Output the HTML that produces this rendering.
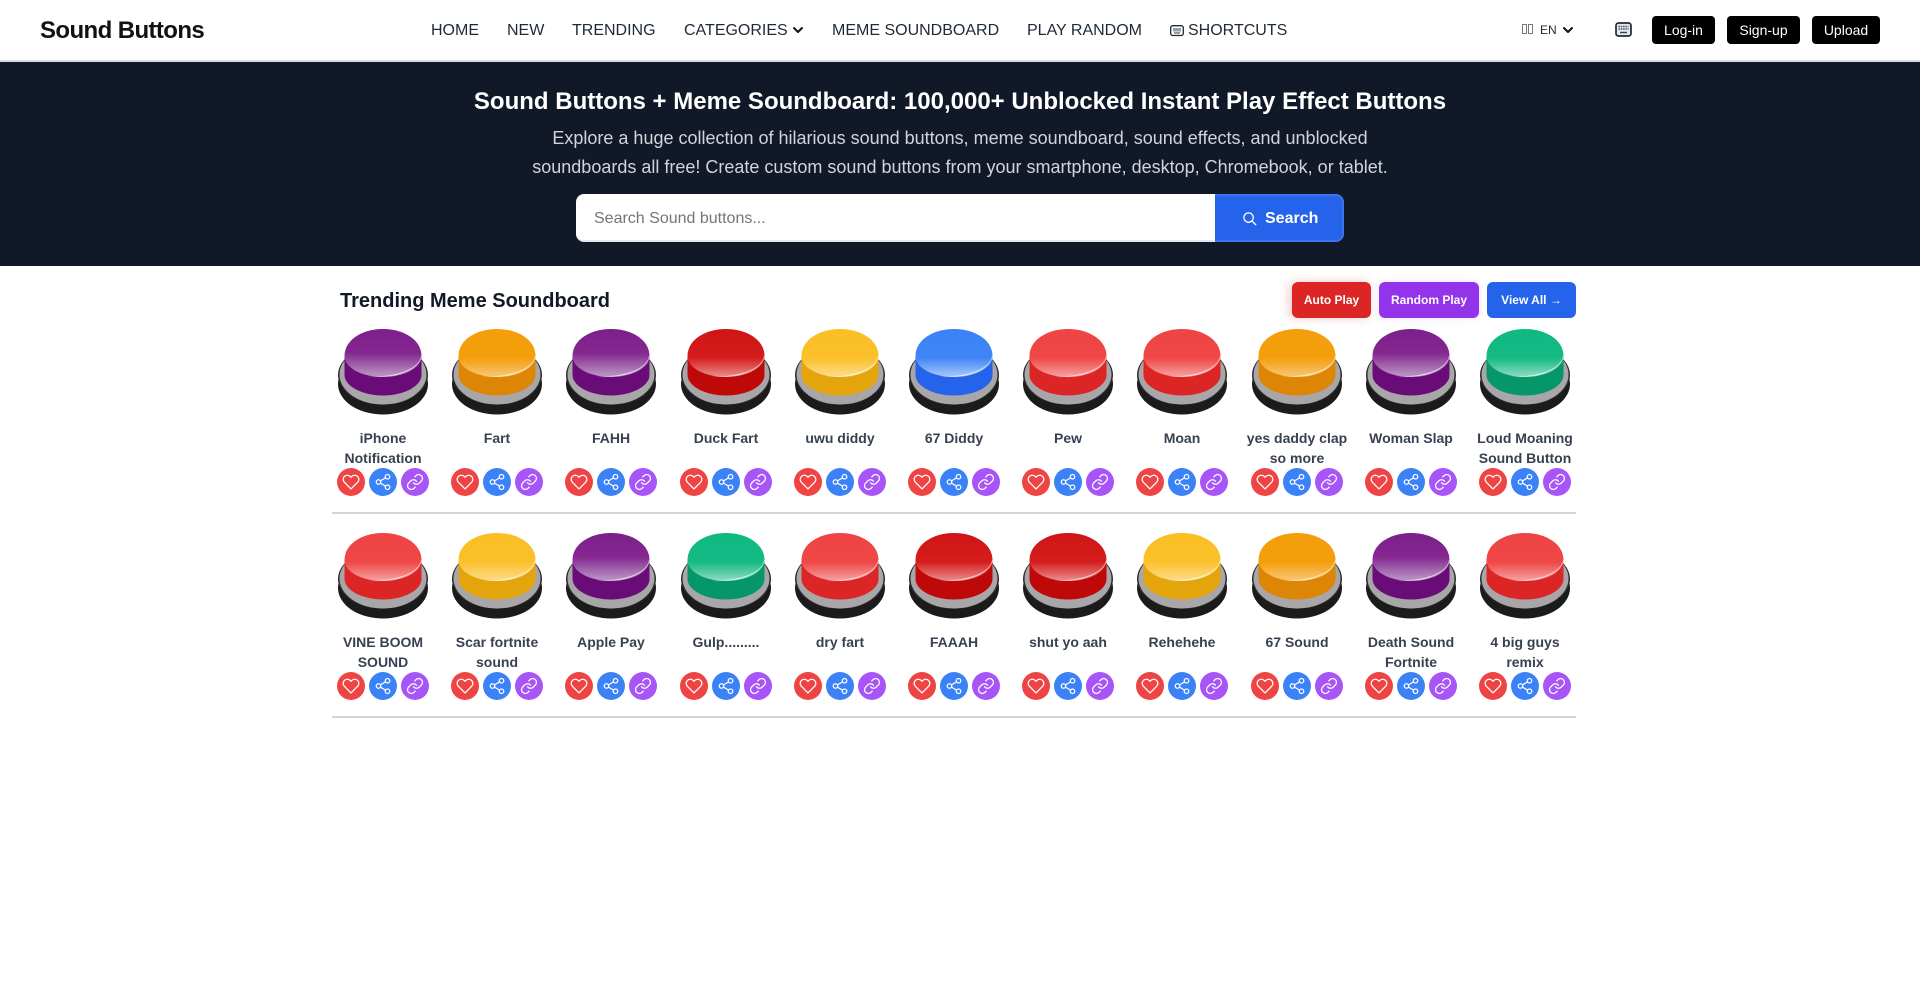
<!DOCTYPE html>
<html lang="en"><head><meta charset="utf-8"><title>Sound Buttons</title>
<style>
*{box-sizing:border-box;margin:0;padding:0}
html,body{width:1920px;height:993px;overflow:hidden;background:#fff;font-family:"Liberation Sans",sans-serif;color:#111827}
.a{position:absolute;white-space:nowrap}
#hd{position:absolute;left:0;top:0;width:1920px;height:62px;background:#fff;border-bottom:2px solid #d8dbe0}
.logo{left:40px;top:17px;font-size:24px;font-weight:700;line-height:28px;letter-spacing:-.6px;color:#111}
.nav{top:19px;font-size:16px;line-height:24px;color:#1f2937}
.btn{top:16px;height:28px;background:#000;color:#fff;font-size:14px;line-height:28px;text-align:center;border-radius:4px}
#hero{position:absolute;left:0;top:62px;width:1920px;height:204px;background:#111827}
.c{left:0;width:1920px;text-align:center}
h1{font-size:24px;line-height:32px;font-weight:700;color:#fff}
.p{font-size:18px;line-height:29px;color:#d1d5db}
.inp{left:576px;top:194px;width:640px;height:48px;background:#fff;border-radius:8px 0 0 8px;border-bottom:2px solid #e5e7eb;font-size:16px;line-height:49px;padding-left:18px;color:#757575;overflow:hidden}
.sb{left:1215px;top:194px;width:129px;height:48px;background:#2563eb;border:2px solid #3b74ee;border-left:0;border-radius:0 8px 8px 0;color:#fff;font-weight:700;font-size:16px;line-height:44px}
h2{font-size:20px;line-height:28px;font-weight:700;color:#111827}
.tb{top:282px;height:36px;border-radius:6px;color:#fff;font-size:12px;font-weight:700;line-height:36px;text-align:center}
.card{position:absolute;width:114px;height:184px}
.card>svg.b{position:absolute;left:12px;top:0;width:90px;height:86px}
.card .n{position:absolute;left:0;top:99px;width:114px;text-align:center;font-size:14px;font-weight:700;line-height:20px;color:#374151;white-space:nowrap}
.ic{position:absolute;top:139px;width:28px;height:28px;border-radius:50%}
.ic svg{position:absolute;left:5px;top:5px;width:18px;height:18px;fill:none;stroke:#fff;stroke-width:1.700;stroke-linecap:round;stroke-linejoin:round}
.h{left:11px;background:#ef4444}.s{left:43px;background:#3b82f6}.l{left:75px;background:#a855f7}
.dv{position:absolute;left:332px;width:1244px;height:2px;background:#d1d5db}
.tf{position:absolute;top:24px;width:5px;height:10px;border:1px solid #777}
</style></head><body>
<svg width="0" height="0" style="position:absolute"><defs>
<g id="base"><ellipse cx="45" cy="55" rx="45" ry="30.500" fill="#1b1b1b"/><ellipse cx="45" cy="46" rx="45" ry="30" fill="#2b2b2b"/><ellipse cx="45" cy="45.500" rx="43.500" ry="30" fill="#a8a6a8"/></g>
<path id="top" d="M6.500 27C6.500 11 24 0 45 0S83.500 11 83.500 27C83.500 39 66 48 45 48S6.500 39 6.500 27Z"/>
<path id="sd" d="M6.500 27V46C6.500 57 24 66.500 45 66.500S83.500 57 83.500 46V27Z"/>
<linearGradient id="hl" gradientUnits="userSpaceOnUse" x1="30" y1="0" x2="84" y2="0"><stop offset="0" stop-color="#fff" stop-opacity="0"/><stop offset=".5" stop-color="#fff" stop-opacity=".8"/><stop offset="1" stop-color="#fff" stop-opacity=".5"/></linearGradient>
<path id="ar" d="M30 47.500C60 49 81 40 83.500 27" fill="none" stroke="url(#hl)" stroke-width="1"/>
<linearGradient id="pu" x1="0" y1="0" x2="0" y2="1"><stop offset="0" stop-color="#7c1f8c"/><stop offset=".5" stop-color="#84278f"/><stop offset=".95" stop-color="#b88fc2"/></linearGradient>
<linearGradient id="or" x1="0" y1="0" x2="0" y2="1"><stop offset="0" stop-color="#f59e0b"/><stop offset=".6" stop-color="#f59e0b"/><stop offset="1" stop-color="#f8c877"/></linearGradient>
<linearGradient id="re" x1="0" y1="0" x2="0" y2="1"><stop offset="0" stop-color="#ef4444"/><stop offset=".6" stop-color="#ef4646"/><stop offset="1" stop-color="#f7a3a3"/></linearGradient>
<linearGradient id="dr" x1="0" y1="0" x2="0" y2="1"><stop offset="0" stop-color="#cf1414"/><stop offset=".6" stop-color="#d51d1d"/><stop offset="1" stop-color="#ea8f8f"/></linearGradient>
<linearGradient id="ye" x1="0" y1="0" x2="0" y2="1"><stop offset="0" stop-color="#fbbf24"/><stop offset=".6" stop-color="#fbc02a"/><stop offset="1" stop-color="#fcdc8c"/></linearGradient>
<linearGradient id="bl" x1="0" y1="0" x2="0" y2="1"><stop offset="0" stop-color="#3b82f6"/><stop offset=".6" stop-color="#3f85f6"/><stop offset="1" stop-color="#a9caf9"/></linearGradient>
<linearGradient id="gr" x1="0" y1="0" x2="0" y2="1"><stop offset="0" stop-color="#10b981"/><stop offset=".6" stop-color="#14b983"/><stop offset="1" stop-color="#8fdcc2"/></linearGradient>
<symbol id="bpu" viewBox="0 0 90 86"><use href="#base"/><use href="#sd" fill="#6a0c78"/><use href="#top" fill="url(#pu)"/><use href="#ar"/></symbol>
<symbol id="bor" viewBox="0 0 90 86"><use href="#base"/><use href="#sd" fill="#dd8606"/><use href="#top" fill="url(#or)"/><use href="#ar"/></symbol>
<symbol id="bre" viewBox="0 0 90 86"><use href="#base"/><use href="#sd" fill="#dc2626"/><use href="#top" fill="url(#re)"/><use href="#ar"/></symbol>
<symbol id="bdr" viewBox="0 0 90 86"><use href="#base"/><use href="#sd" fill="#bf0909"/><use href="#top" fill="url(#dr)"/><use href="#ar"/></symbol>
<symbol id="bye" viewBox="0 0 90 86"><use href="#base"/><use href="#sd" fill="#e3a50b"/><use href="#top" fill="url(#ye)"/><use href="#ar"/></symbol>
<symbol id="bbl" viewBox="0 0 90 86"><use href="#base"/><use href="#sd" fill="#2563eb"/><use href="#top" fill="url(#bl)"/><use href="#ar"/></symbol>
<symbol id="bgr" viewBox="0 0 90 86"><use href="#base"/><use href="#sd" fill="#059669"/><use href="#top" fill="url(#gr)"/><use href="#ar"/></symbol>
<symbol id="ih" viewBox="0 0 24 24"><path d="M20.840 4.610a5.500 5.500 0 0 0-7.780 0L12 5.670l-1.060-1.060a5.500 5.500 0 0 0-7.780 7.780l1.060 1.060L12 21.230l7.780-7.780 1.060-1.060a5.500 5.500 0 0 0 0-7.780z"/></symbol>
<symbol id="is" viewBox="0 0 24 24"><circle cx="18" cy="5" r="3"/><circle cx="6" cy="12" r="3"/><circle cx="18" cy="19" r="3"/><path d="M8.600 13.500l6.800 4M15.400 6.500l-6.800 4"/></symbol>
<symbol id="il" viewBox="0 0 24 24"><path d="M10 13a5 5 0 0 0 7.540.54l3-3a5 5 0 0 0-7.070-7.070l-1.720 1.710"/><path d="M14 11a5 5 0 0 0-7.540-.54l-3 3a5 5 0 0 0 7.070 7.070l1.710-1.710"/></symbol>
</defs></svg>

<div id="hd"></div>
<div class="a logo">Sound Buttons</div>
<div class="a nav" style="left:431px">HOME</div>
<div class="a nav" style="left:507px">NEW</div>
<div class="a nav" style="left:572px">TRENDING</div>
<div class="a nav" style="left:684px">CATEGORIES</div>
<svg class="a" style="left:792px;top:24px" width="12" height="12" viewBox="0 0 24 24" fill="none" stroke="#111" stroke-width="4" stroke-linecap="round" stroke-linejoin="round"><path d="M4 8l8 8 8-8"/></svg>
<div class="a nav" style="left:832px">MEME SOUNDBOARD</div>
<div class="a nav" style="left:1027px">PLAY RANDOM</div>
<svg class="a" style="left:1170px;top:24px" width="14" height="13" viewBox="0 0 14 13" fill="none"><rect x=".7" y="1.700" width="12.600" height="9.800" rx="2" stroke="#1f2937" stroke-width="1.300"/><rect x="3" y="4" width="8" height="3.500" fill="#9aa0aa"/><path d="M4 9h6" stroke="#555" stroke-width="1.200"/></svg>
<div class="a nav" style="left:1188px">SHORTCUTS</div>
<div class="tf" style="left:1522px"></div><div class="tf" style="left:1528px"></div>
<div class="a" style="left:1540px;top:23px;font-size:12px;line-height:14px;color:#1f2937">EN</div>
<svg class="a" style="left:1562px;top:24px" width="12" height="12" viewBox="0 0 24 24" fill="none" stroke="#111" stroke-width="4" stroke-linecap="round" stroke-linejoin="round"><path d="M4 8l8 8 8-8"/></svg>
<svg class="a" style="left:1615px;top:22px" width="17" height="15" viewBox="0 0 17 15" fill="none"><rect x="1" y="1" width="15" height="13" rx="2.500" fill="#e5e7eb" stroke="#1f2937" stroke-width="1.700"/><path d="M3.500 4.500h10M3.500 7h10" stroke="#4b5563" stroke-width="1.400" stroke-dasharray="1.500 .8"/><path d="M5 10.500h7" stroke="#374151" stroke-width="1.400"/></svg>
<div class="a btn" style="left:1652px;width:63px">Log-in</div>
<div class="a btn" style="left:1727px;width:73px">Sign-up</div>
<div class="a btn" style="left:1812px;width:68px">Upload</div>

<div id="hero"></div>
<h1 class="a c" style="top:86px">Sound Buttons + Meme Soundboard: 100,000+ Unblocked Instant Play Effect Buttons</h1>
<div class="a c p" style="top:124px">Explore a huge collection of hilarious sound buttons, meme soundboard, sound effects, and unblocked</div>
<div class="a c p" style="top:153px">soundboards all free! Create custom sound buttons from your smartphone, desktop, Chromebook, or tablet.</div>
<div class="a inp">Search Sound buttons...</div>
<div class="a sb"><span class="a" style="left:50px;top:1px">Search</span>
<svg class="a" style="left:27px;top:15px" width="15" height="15" viewBox="0 0 24 24" fill="none" stroke="#fff" stroke-width="2" stroke-linecap="round"><circle cx="10.500" cy="10.500" r="7.500"/><path d="M16 16l6 6"/></svg></div>

<h2 class="a" style="left:340px;top:287px">Trending Meme Soundboard</h2>
<div class="a tb" style="left:1292px;width:79px;background:#dc2626;box-shadow:-3px 0 10px rgba(220,38,38,.25)">Auto Play</div>
<div class="a tb" style="left:1379px;width:100px;background:#9333ea;box-shadow:0 0 8px rgba(147,51,234,.15)">Random Play</div>
<div class="a tb" style="left:1487px;width:89px;background:#2563eb">View All →</div>

<div class="card" style="left:326px;top:329px"><svg class="b"><use href="#bpu"/></svg><div class="n">iPhone<br>Notification</div><div class="ic h"><svg><use href="#ih"/></svg></div><div class="ic s"><svg><use href="#is"/></svg></div><div class="ic l"><svg><use href="#il"/></svg></div></div>
<div class="card" style="left:440px;top:329px"><svg class="b"><use href="#bor"/></svg><div class="n">Fart</div><div class="ic h"><svg><use href="#ih"/></svg></div><div class="ic s"><svg><use href="#is"/></svg></div><div class="ic l"><svg><use href="#il"/></svg></div></div>
<div class="card" style="left:554px;top:329px"><svg class="b"><use href="#bpu"/></svg><div class="n">FAHH</div><div class="ic h"><svg><use href="#ih"/></svg></div><div class="ic s"><svg><use href="#is"/></svg></div><div class="ic l"><svg><use href="#il"/></svg></div></div>
<div class="card" style="left:669px;top:329px"><svg class="b"><use href="#bdr"/></svg><div class="n">Duck Fart</div><div class="ic h"><svg><use href="#ih"/></svg></div><div class="ic s"><svg><use href="#is"/></svg></div><div class="ic l"><svg><use href="#il"/></svg></div></div>
<div class="card" style="left:783px;top:329px"><svg class="b"><use href="#bye"/></svg><div class="n">uwu diddy</div><div class="ic h"><svg><use href="#ih"/></svg></div><div class="ic s"><svg><use href="#is"/></svg></div><div class="ic l"><svg><use href="#il"/></svg></div></div>
<div class="card" style="left:897px;top:329px"><svg class="b"><use href="#bbl"/></svg><div class="n">67 Diddy</div><div class="ic h"><svg><use href="#ih"/></svg></div><div class="ic s"><svg><use href="#is"/></svg></div><div class="ic l"><svg><use href="#il"/></svg></div></div>
<div class="card" style="left:1011px;top:329px"><svg class="b"><use href="#bre"/></svg><div class="n">Pew</div><div class="ic h"><svg><use href="#ih"/></svg></div><div class="ic s"><svg><use href="#is"/></svg></div><div class="ic l"><svg><use href="#il"/></svg></div></div>
<div class="card" style="left:1125px;top:329px"><svg class="b"><use href="#bre"/></svg><div class="n">Moan</div><div class="ic h"><svg><use href="#ih"/></svg></div><div class="ic s"><svg><use href="#is"/></svg></div><div class="ic l"><svg><use href="#il"/></svg></div></div>
<div class="card" style="left:1240px;top:329px"><svg class="b"><use href="#bor"/></svg><div class="n">yes daddy clap<br>so more</div><div class="ic h"><svg><use href="#ih"/></svg></div><div class="ic s"><svg><use href="#is"/></svg></div><div class="ic l"><svg><use href="#il"/></svg></div></div>
<div class="card" style="left:1354px;top:329px"><svg class="b"><use href="#bpu"/></svg><div class="n">Woman Slap</div><div class="ic h"><svg><use href="#ih"/></svg></div><div class="ic s"><svg><use href="#is"/></svg></div><div class="ic l"><svg><use href="#il"/></svg></div></div>
<div class="card" style="left:1468px;top:329px"><svg class="b"><use href="#bgr"/></svg><div class="n">Loud Moaning<br>Sound Button</div><div class="ic h"><svg><use href="#ih"/></svg></div><div class="ic s"><svg><use href="#is"/></svg></div><div class="ic l"><svg><use href="#il"/></svg></div></div>
<div class="dv" style="top:512px"></div>

<div class="card" style="left:326px;top:533px"><svg class="b"><use href="#bre"/></svg><div class="n">VINE BOOM<br>SOUND</div><div class="ic h"><svg><use href="#ih"/></svg></div><div class="ic s"><svg><use href="#is"/></svg></div><div class="ic l"><svg><use href="#il"/></svg></div></div>
<div class="card" style="left:440px;top:533px"><svg class="b"><use href="#bye"/></svg><div class="n">Scar fortnite<br>sound</div><div class="ic h"><svg><use href="#ih"/></svg></div><div class="ic s"><svg><use href="#is"/></svg></div><div class="ic l"><svg><use href="#il"/></svg></div></div>
<div class="card" style="left:554px;top:533px"><svg class="b"><use href="#bpu"/></svg><div class="n">Apple Pay</div><div class="ic h"><svg><use href="#ih"/></svg></div><div class="ic s"><svg><use href="#is"/></svg></div><div class="ic l"><svg><use href="#il"/></svg></div></div>
<div class="card" style="left:669px;top:533px"><svg class="b"><use href="#bgr"/></svg><div class="n">Gulp.........</div><div class="ic h"><svg><use href="#ih"/></svg></div><div class="ic s"><svg><use href="#is"/></svg></div><div class="ic l"><svg><use href="#il"/></svg></div></div>
<div class="card" style="left:783px;top:533px"><svg class="b"><use href="#bre"/></svg><div class="n">dry fart</div><div class="ic h"><svg><use href="#ih"/></svg></div><div class="ic s"><svg><use href="#is"/></svg></div><div class="ic l"><svg><use href="#il"/></svg></div></div>
<div class="card" style="left:897px;top:533px"><svg class="b"><use href="#bdr"/></svg><div class="n">FAAAH</div><div class="ic h"><svg><use href="#ih"/></svg></div><div class="ic s"><svg><use href="#is"/></svg></div><div class="ic l"><svg><use href="#il"/></svg></div></div>
<div class="card" style="left:1011px;top:533px"><svg class="b"><use href="#bdr"/></svg><div class="n">shut yo aah</div><div class="ic h"><svg><use href="#ih"/></svg></div><div class="ic s"><svg><use href="#is"/></svg></div><div class="ic l"><svg><use href="#il"/></svg></div></div>
<div class="card" style="left:1125px;top:533px"><svg class="b"><use href="#bye"/></svg><div class="n">Rehehehe</div><div class="ic h"><svg><use href="#ih"/></svg></div><div class="ic s"><svg><use href="#is"/></svg></div><div class="ic l"><svg><use href="#il"/></svg></div></div>
<div class="card" style="left:1240px;top:533px"><svg class="b"><use href="#bor"/></svg><div class="n">67 Sound</div><div class="ic h"><svg><use href="#ih"/></svg></div><div class="ic s"><svg><use href="#is"/></svg></div><div class="ic l"><svg><use href="#il"/></svg></div></div>
<div class="card" style="left:1354px;top:533px"><svg class="b"><use href="#bpu"/></svg><div class="n">Death Sound<br>Fortnite</div><div class="ic h"><svg><use href="#ih"/></svg></div><div class="ic s"><svg><use href="#is"/></svg></div><div class="ic l"><svg><use href="#il"/></svg></div></div>
<div class="card" style="left:1468px;top:533px"><svg class="b"><use href="#bre"/></svg><div class="n">4 big guys<br>remix</div><div class="ic h"><svg><use href="#ih"/></svg></div><div class="ic s"><svg><use href="#is"/></svg></div><div class="ic l"><svg><use href="#il"/></svg></div></div>
<div class="dv" style="top:716px"></div>
</body></html>
